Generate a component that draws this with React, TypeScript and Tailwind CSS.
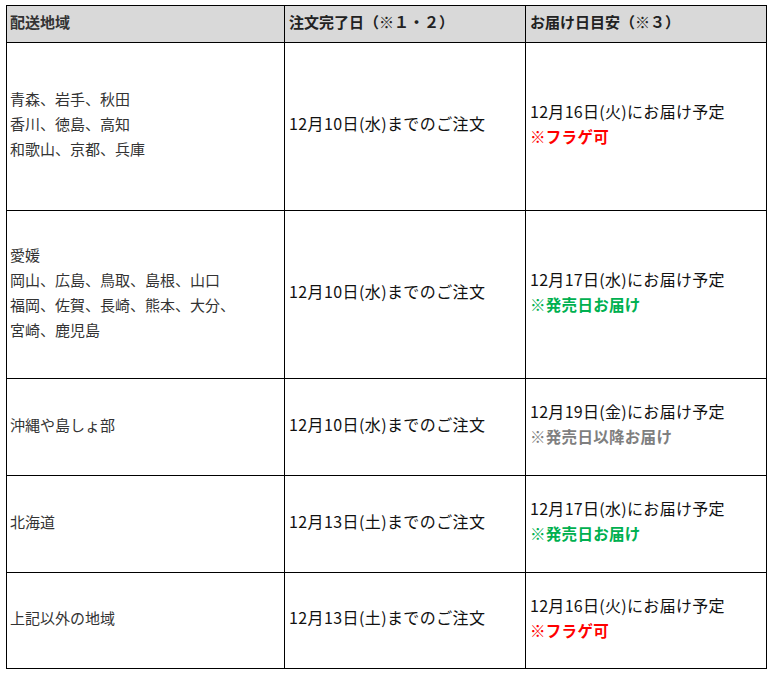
const rows = [
  {
    area: ["青森、岩手、秋田", "香川、徳島、高知", "和歌山、京都、兵庫"],
    order: "12月10日(水)までのご注文",
    date: "12月16日(火)にお届け予定",
    note: "※フラゲ可",
    tone: "red",
    h: "h-[168px]",
  },
  {
    area: ["愛媛", "岡山、広島、鳥取、島根、山口", "福岡、佐賀、長崎、熊本、大分、", "宮崎、鹿児島"],
    order: "12月10日(水)までのご注文",
    date: "12月17日(水)にお届け予定",
    note: "※発売日お届け",
    tone: "green",
    h: "h-[168px]",
  },
  {
    area: ["沖縄や島しょ部"],
    order: "12月10日(水)までのご注文",
    date: "12月19日(金)にお届け予定",
    note: "※発売日以降お届け",
    tone: "gray",
    h: "h-[97px]",
  },
  {
    area: ["北海道"],
    order: "12月13日(土)までのご注文",
    date: "12月17日(水)にお届け予定",
    note: "※発売日お届け",
    tone: "green",
    h: "h-[97px]",
  },
  {
    area: ["上記以外の地域"],
    order: "12月13日(土)までのご注文",
    date: "12月16日(火)にお届け予定",
    note: "※フラゲ可",
    tone: "red",
    h: "h-[96px]",
  },
];

const toneClass: Record<string, string> = {
  red: "text-[#ff0000]",
  green: "text-[#00b050]",
  gray: "text-[#7f7f7f]",
};

export default function App() {
  return (
    <div className="min-h-[675px] bg-white pl-[6px] pt-[5px] font-['Noto_Sans_CJK_JP',sans-serif]">
      <table className="w-[760px] table-fixed border-collapse">
        <colgroup>
          <col className="w-[278px]" />
          <col className="w-[241px]" />
          <col className="w-[241px]" />
        </colgroup>
        <thead>
          <tr className="h-[37px] bg-[#d9d9d9]">
            <th className="border border-black pl-[3px] pr-[4px] pb-[4px] text-left text-[15px] font-bold text-[#333]">
              配送地域
            </th>
            <th className="border border-black px-[4px] pb-[4px] text-left text-[15px] font-bold text-[#222]">
              注文完了日（※１・２）
            </th>
            <th className="border border-black px-[4px] pb-[4px] text-left text-[15px] font-bold text-[#222]">
              お届け日目安（※３）
            </th>
          </tr>
        </thead>
        <tbody>
          {rows.map((r, i) => (
            <tr key={i} className={r.h}>
              <td className="border border-black pl-[3px] pr-[4px] pb-[6px] align-middle text-[15px] leading-[25px] text-[#333]">
                {r.area.map((a) => (
                  <div key={a}>{a}</div>
                ))}
              </td>
              <td className="border border-black px-[4px] pb-[6px] align-middle text-[16px] leading-[25px] tracking-[0.4px] text-[#111]">
                {r.order}
              </td>
              <td className="border border-black px-[4px] pb-[6px] align-middle text-[16px] leading-[25px] tracking-[0.3px] text-[#111]">
                <div>{r.date}</div>
                <div className={`text-[15.5px] font-bold ${toneClass[r.tone]}`}>{r.note}</div>
              </td>
            </tr>
          ))}
        </tbody>
      </table>
    </div>
  );
}
